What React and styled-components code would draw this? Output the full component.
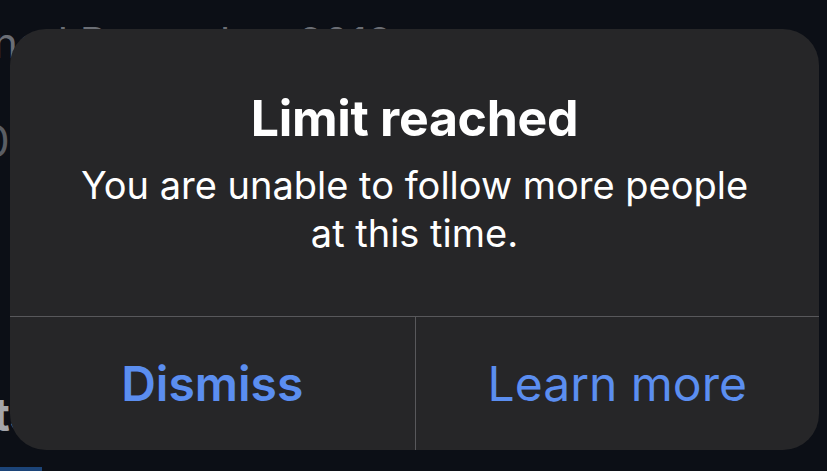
import React from "react";
import styled, { createGlobalStyle } from "styled-components";

const Global = createGlobalStyle`
  html, body { margin: 0; padding: 0; background: #0c0f16; }
  * { box-sizing: border-box; }
`;

const Page = styled.div`
  position: relative;
  width: 827px;
  height: 471px;
  overflow: hidden;
  background: #0c0f16;
  font-family: Inter, "Noto Sans", sans-serif;
`;

const Behind = styled.div`
  display: flex;
  flex-direction: column;
  height: 100%;
  padding-top: 21px;
`;

const JoinedLine = styled.div`
  margin-left: -7px;
  font-size: 42px;
  line-height: 44px;
  color: #6b6e75;
  white-space: nowrap;
`;

const StatsLine = styled.div`
  margin-top: 54px;
  margin-left: -18px;
  font-size: 44px;
  line-height: 44px;
  color: #5a5d63;
  white-space: nowrap;
`;

const Spacer = styled.div`
  flex: 1;
`;

const TabLabel = styled.div`
  margin-left: -128px;
  font-size: 46px;
  line-height: 46px;
  font-weight: 700;
  color: #a3a5aa;
  white-space: nowrap;
`;

const TabIndicator = styled.div`
  margin-top: 30px;
  width: 42px;
  height: 4px;
  background: #1c4478;
`;

const Dialog = styled.div`
  position: absolute;
  left: 10px;
  top: 29px;
  width: 809px;
  height: 421px;
  border-radius: 36px;
  background: #262628;
  display: flex;
  flex-direction: column;
  overflow: hidden;
  color: #ffffff;
`;

const Content = styled.div`
  height: 288px;
  display: flex;
  flex-direction: column;
  align-items: center;
  padding-top: 59px;
  text-align: center;
  border-bottom: 1px solid #58585b;
`;

const Title = styled.div`
  font-size: 50px;
  line-height: 60px;
  font-weight: 700;
  letter-spacing: -0.3px;
`;

const Message = styled.div`
  margin-top: 13px;
  font-size: 38px;
  line-height: 48px;
  font-weight: 400;
`;

const Actions = styled.div`
  flex: 1;
  display: grid;
  grid-template-columns: 1fr 1fr;
`;

const ActionButton = styled.button`
  border: none;
  background: transparent;
  margin: 0;
  padding: 0;
  display: flex;
  align-items: center;
  justify-content: center;
  font-family: Inter, "Noto Sans", sans-serif;
  font-size: 48px;
  font-weight: ${(p) => (p.$primary ? 600 : 400)};
  color: #5b8ef0;
  border-left: ${(p) => (p.$divided ? "1px solid #58585b" : "none")};
  cursor: pointer;
`;

export default function App() {
  return (
    <>
      <Global />
      <Page>
        <Behind>
          <JoinedLine>ned December 2019</JoinedLine>
          <StatsLine>0 Following</StatsLine>
          <Spacer />
          <TabLabel>Tweets</TabLabel>
          <TabIndicator />
        </Behind>
        <Dialog role="alertdialog">
          <Content>
            <Title>Limit reached</Title>
            <Message>
              You are unable to follow more people
              <br />
              at this time.
            </Message>
          </Content>
          <Actions>
            <ActionButton $primary>Dismiss</ActionButton>
            <ActionButton $divided>Learn more</ActionButton>
          </Actions>
        </Dialog>
      </Page>
    </>
  );
}
